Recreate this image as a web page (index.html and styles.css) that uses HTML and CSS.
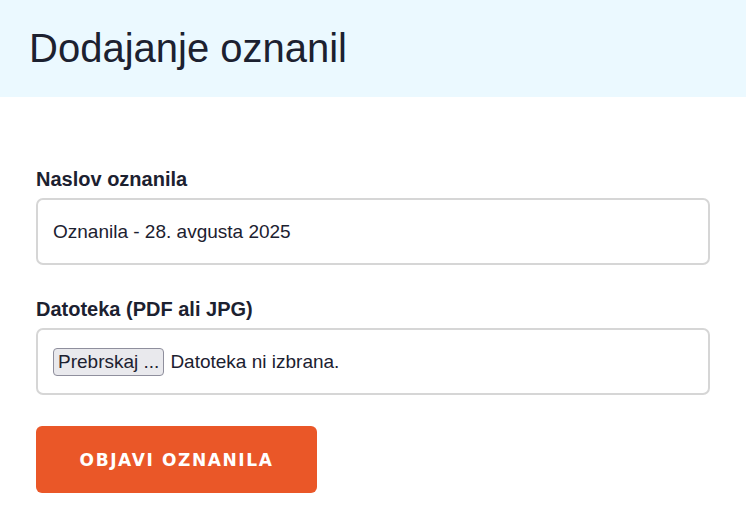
FILE: index.html
```html
<!DOCTYPE html>
<html lang="sl">
<head>
<meta charset="utf-8">
<title>Dodajanje oznanil</title>
<link rel="stylesheet" href="styles.css">
</head>
<body>
<header class="page-header">
  <h1 class="page-title">Dodajanje oznanil</h1>
</header>
<main class="content">
  <form class="form">
    <div class="field">
      <label class="field-label" for="naslov">Naslov oznanila</label>
      <div class="field-box">
        <input class="text-input" id="naslov" type="text" value="Oznanila - 28. avgusta 2025">
      </div>
    </div>
    <div class="field">
      <label class="field-label">Datoteka (PDF ali JPG)</label>
      <div class="field-box file-box">
        <button class="file-button" type="button">Prebrskaj ...</button>
        <span class="file-status">Datoteka ni izbrana.</span>
      </div>
    </div>
    <button class="submit-button" type="button">OBJAVI OZNANILA</button>
  </form>
</main>
</body>
</html>
```
FILE: styles.css
```css
* { box-sizing: border-box; }
html, body { margin: 0; padding: 0; background: #ffffff; }
body {
  font-family: "Liberation Sans", Arial, sans-serif;
  color: #1c2130;
  width: 746px;
}
.page-header {
  background: #ebf9ff;
  height: 97px;
  display: flex;
  align-items: center;
  padding-left: 29px;
}
.page-title {
  margin: 0;
  font-weight: 400;
  font-size: 40px;
  line-height: 46px;
  color: #1c2130;
  padding-bottom: 2px;
}
.content {
  padding: 71px 36px 0 36px;
}
.form {
  display: flex;
  flex-direction: column;
  gap: 33px;
  align-items: flex-start;
}
.field {
  width: 100%;
  display: flex;
  flex-direction: column;
  gap: 7px;
}
.field-label {
  font-weight: 700;
  font-size: 20px;
  line-height: 23px;
  color: #1c2130;
}
.field-box {
  height: 67px;
  border: 2px solid #d6d6d6;
  border-radius: 7px;
  display: flex;
  align-items: center;
  padding: 0 15px;
  background: #fff;
}
.text-input {
  border: none;
  outline: none;
  padding: 0;
  width: 100%;
  font-family: "Liberation Sans", Arial, sans-serif;
  font-size: 19px;
  color: #1c2130;
  background: transparent;
}
.file-box { gap: 6px; }
.file-button {
  font-family: "Liberation Sans", Arial, sans-serif;
  font-size: 19px;
  color: #1c2130;
  background: #e9e9ed;
  border: 1px solid #8f8f9d;
  border-radius: 4px;
  padding: 2px 4px;
  line-height: 22px;
}
.file-status {
  font-size: 19px;
  color: #1c2130;
}
.submit-button {
  margin-top: -2px;
  width: 281px;
  height: 67px;
  border: none;
  border-radius: 6px;
  background: #ea5728;
  color: #ffffff;
  font-family: "DejaVu Sans", sans-serif;
  font-weight: 700;
  font-size: 17px;
  letter-spacing: 1.6px;
}
```
